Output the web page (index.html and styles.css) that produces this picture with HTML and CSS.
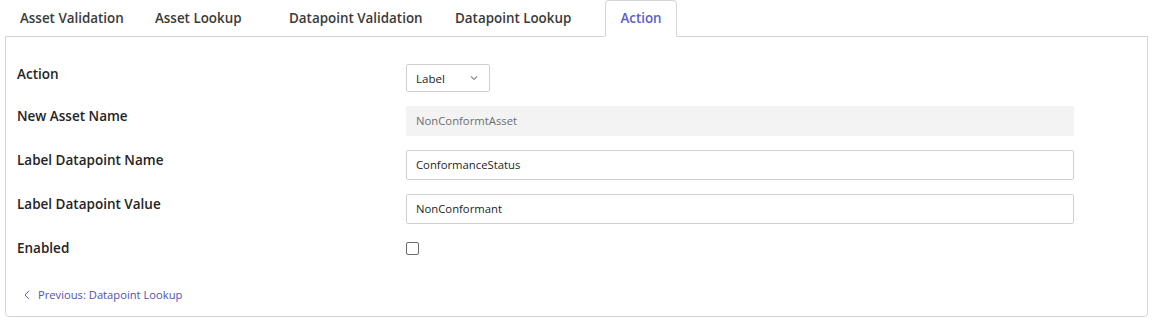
FILE: index.html
```html
<!DOCTYPE html>
<html>
<head>
<meta charset="utf-8">
<link rel="stylesheet" href="styles.css">
</head>
<body>
<div class="page">
  <div class="tabs">
    <div class="tab tab-1">Asset Validation</div>
    <div class="tab tab-2">Asset Lookup</div>
    <div class="tab tab-3">Datapoint Validation</div>
    <div class="tab tab-4">Datapoint Lookup</div>
    <div class="tab tab-5 active">Action</div>
  </div>
  <div class="panel">
    <div class="row">
      <div class="label">Action</div>
      <div class="control">
        <div class="select">
          <span>Label</span>
          <svg class="chev" width="8" height="6" viewBox="0 0 8 6"><path d="M1 1.5 L4 4.5 L7 1.5" fill="none" stroke="#8a8a8a" stroke-width="1.1"/></svg>
        </div>
      </div>
    </div>
    <div class="row">
      <div class="label">New Asset Name</div>
      <div class="control"><div class="input disabled">NonConformtAsset</div></div>
    </div>
    <div class="row">
      <div class="label">Label Datapoint Name</div>
      <div class="control"><div class="input">ConformanceStatus</div></div>
    </div>
    <div class="row">
      <div class="label">Label Datapoint Value</div>
      <div class="control"><div class="input">NonConformant</div></div>
    </div>
    <div class="row row-check">
      <div class="label">Enabled</div>
      <div class="control"><span class="checkbox"></span></div>
    </div>
    <div class="footer">
      <a class="prev">
        <svg width="6" height="10" viewBox="0 0 6 10"><path d="M5 0.8 L1 5 L5 9.2" fill="none" stroke="#5b5fc7" stroke-width="1"/></svg>
        <span>Previous: Datapoint Lookup</span>
      </a>
    </div>
  </div>
</div>
</body>
</html>
```
FILE: styles.css
```css
* { box-sizing: border-box; }
body {
  margin: 0;
  background: #fff;
  font-family: "Open Sans", "Noto Sans", sans-serif;
  color: #242424;
}
.page {
  padding: 0 5px;
}
.tabs {
  display: flex;
  height: 37px;
  padding-left: 1px;
  position: relative;
  z-index: 1;
}
.tab {
  font-size: 13.4px;
  font-weight: 600;
  color: #3a3a3a;
  padding: 0 14px;
  line-height: 36px;
  height: 37px;
  white-space: nowrap;
}
.tab-1 { width: 135px; }
.tab-2 { width: 134px; }
.tab-3 { width: 166px; }
.tab-4 { width: 164px; }
.tab-5 { width: 72px; }
.tab.active {
  color: #5b5fc7;
  background: #fff;
  border: 1px solid #d6d6d6;
  border-bottom: 1px solid #fff;
  border-radius: 4px 4px 0 0;
  line-height: 35px;
  text-align: center;
  padding: 0;
}
.panel {
  margin-top: -1px;
  border: 1px solid #d6d6d6;
  border-radius: 0 0 4px 4px;
  height: 281px;
  padding: 27px 0 0 11px;
}
.row {
  display: flex;
  align-items: flex-start;
  margin-bottom: 14px;
}
.label {
  width: 389px;
  font-size: 13.5px;
  font-weight: 600;
  line-height: 20px;
  color: #242424;
}
.control {
  width: 668px;
}
.select {
  width: 84px;
  height: 28px;
  border: 1px solid #d1d1d1;
  border-radius: 2px;
  display: flex;
  align-items: center;
  padding-left: 9px;
  font-size: 11.5px;
  color: #242424;
}
.select .chev {
  margin-left: 25px;
}
.input {
  height: 30px;
  border: 1px solid #d1d1d1;
  border-radius: 2px;
  padding-left: 9px;
  font-size: 11.3px;
  line-height: 28px;
  color: #242424;
}
.input.disabled {
  background: #f3f3f3;
  border-color: #f3f3f3;
  color: #6e6e6e;
}
.row-check .control {
  height: 20px;
  display: flex;
  align-items: center;
}
.checkbox {
  display: inline-block;
  width: 13px;
  height: 13px;
  border: 1px solid #6b6b6b;
  border-radius: 2px;
}
.footer {
  padding: 11px 0 0 7px;
}
.prev {
  display: inline-flex;
  align-items: center;
  gap: 8px;
  font-size: 11.2px;
  color: #4f52b2;
  line-height: 16px;
}
```
